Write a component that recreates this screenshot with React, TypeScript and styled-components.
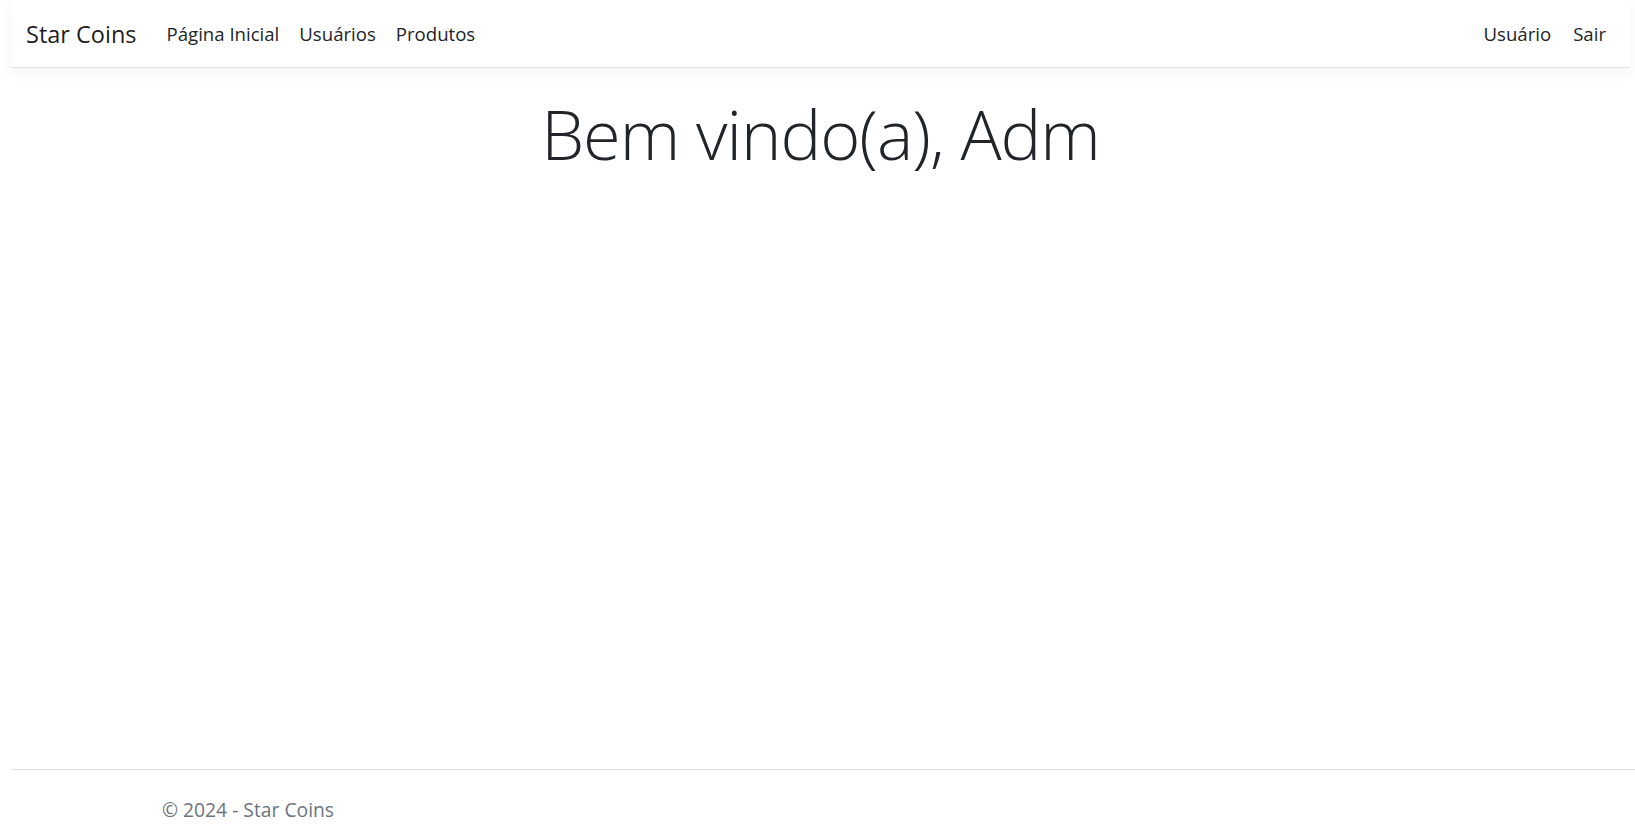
import React from "react";
import styled, { createGlobalStyle } from "styled-components";

const GlobalStyle = createGlobalStyle`
  html, body {
    margin: 0;
    padding: 0;
    background: #ffffff;
  }
  body {
    font-family: "Open Sans", "Noto Sans", "Liberation Sans", sans-serif;
    color: #212529;
  }
  * { box-sizing: border-box; }
`;

const Page = styled.div`
  display: flex;
  flex-direction: column;
  min-height: 833px;
`;

const NavBar = styled.nav`
  margin: 0 5px 0 11px;
  height: 68px;
  background: #ffffff;
  border-bottom: 1px solid #dee2e6;
  box-shadow: 0 5px 14px rgba(0, 0, 0, 0.05);
  display: flex;
  align-items: center;
  padding: 0 24px 0 15px;
`;

const Brand = styled.a`
  font-size: 23.5px;
  color: rgba(0, 0, 0, 0.9);
  text-decoration: none;
  margin-right: 30px;
`;

const NavList = styled.div<{ $end?: boolean }>`
  display: flex;
  align-items: center;
  gap: ${(p) => (p.$end ? "22px" : "20px")};
  margin-left: ${(p) => (p.$end ? "auto" : "0")};
`;

const NavLink = styled.a`
  font-size: 18.6px;
  color: #212529;
  text-decoration: none;
`;

const Main = styled.main`
  flex: 1;
  margin: 0 5px 0 11px;
  padding-top: 25px;
  text-align: center;
`;

const Title = styled.h1`
  margin: 0;
  font-size: 68.5px;
  font-weight: 300;
  line-height: 1.2;
  color: #212529;
  letter-spacing: -1px;
`;

const Footer = styled.footer`
  margin-left: 11px;
  border-top: 1px solid #dee2e6;
  height: 64px;
  display: flex;
  align-items: flex-start;
  padding: 27px 0 0 151px;
`;

const FooterText = styled.span`
  font-size: 19.3px;
  line-height: 26px;
  color: #6c757d;
`;

export default function App() {
  return (
    <>
      <GlobalStyle />
      <Page>
        <NavBar>
          <Brand href="#">Star Coins</Brand>
          <NavList>
            <NavLink href="#">Página Inicial</NavLink>
            <NavLink href="#">Usuários</NavLink>
            <NavLink href="#">Produtos</NavLink>
          </NavList>
          <NavList $end>
            <NavLink href="#">Usuário</NavLink>
            <NavLink href="#">Sair</NavLink>
          </NavList>
        </NavBar>
        <Main>
          <Title>Bem vindo(a), Adm</Title>
        </Main>
        <Footer>
          <FooterText>© 2024 - Star Coins</FooterText>
        </Footer>
      </Page>
    </>
  );
}
